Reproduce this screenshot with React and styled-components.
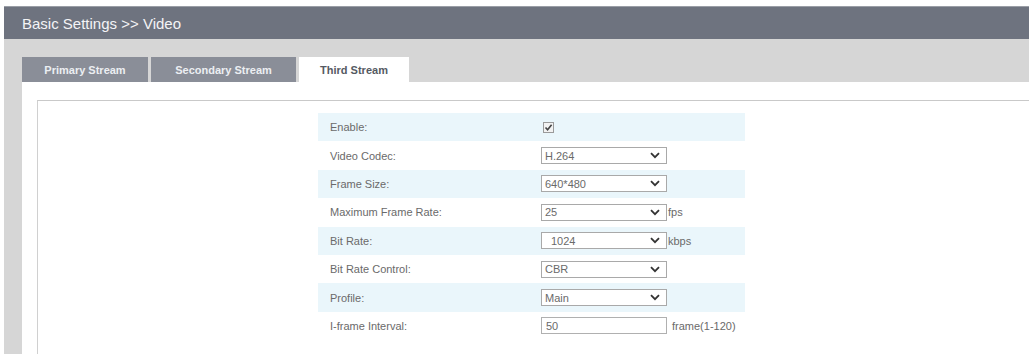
import React from "react";
import styled, { createGlobalStyle } from "styled-components";

const GlobalStyle = createGlobalStyle`
  body {
    margin: 0;
    background: #ffffff;
    font-family: "Liberation Sans", Arial, sans-serif;
  }
`;

const Page = styled.div`
  padding: 6px 0 0 4px;
  height: 348px;
  overflow: hidden;
`;

const Frame = styled.div`
  background: #d6d6d6;
  height: 100%;
  display: flex;
  flex-direction: column;
`;

const Header = styled.div`
  height: 33px;
  background: #6e737f;
  border-top: 1px solid #9a9ea6;
  box-sizing: border-box;
  color: #f4f4f6;
  font-size: 15px;
  display: flex;
  align-items: center;
  padding-left: 18px;
`;

const TabBar = styled.div`
  display: flex;
  gap: 3px;
  padding: 18px 0 0 18px;
`;

const Tab = styled.div`
  height: 25px;
  width: ${(p) => p.w}px;
  display: flex;
  align-items: center;
  justify-content: center;
  font-size: 11px;
  font-weight: bold;
  background: ${(p) => (p.active ? "#ffffff" : "#8a8e98")};
  color: ${(p) => (p.active ? "#555a62" : "#eceef2")};
`;

const Content = styled.div`
  flex: 1;
  margin-left: 18px;
  background: #ffffff;
  padding: 18px 0 0 15px;
  display: flex;
`;

const Panel = styled.div`
  flex: 1;
  border-top: 1px solid #c9c9c9;
  border-left: 1px solid #d0d0d0;
  padding: 12px 0 0 280px;
`;

const Form = styled.div`
  width: 427px;
  display: flex;
  flex-direction: column;
`;

const Row = styled.div`
  height: 28.4px;
  display: flex;
  align-items: center;
  background: ${(p) => (p.shade ? "#eaf6fb" : "transparent")};
  font-size: 11px;
  color: #6a6a6a;
`;

const Label = styled.div`
  width: 223px;
  padding-left: 12px;
  box-sizing: border-box;
`;

const Select = styled.div`
  width: ${(p) => p.w || 126}px;
  height: 17px;
  box-sizing: border-box;
  border: 1px solid #a9a9a9;
  background: #fff;
  display: flex;
  align-items: center;
  justify-content: space-between;
  padding: 0 6px 0 3px;
  color: #6a6a6a;
  font-size: 11px;
`;

const Input = styled.div`
  width: 126px;
  height: 17px;
  box-sizing: border-box;
  border: 1px solid #b0b0b0;
  background: #fff;
  display: flex;
  align-items: center;
  padding-left: 4px;
  color: #6a6a6a;
`;

const Unit = styled.span`
  margin-left: ${(p) => p.gap || 2}px;
  color: #6a6a6a;
`;

const Check = styled.div`
  width: 11px;
  height: 11px;
  box-sizing: border-box;
  border: 1px solid #9a9a9a;
  background: #f2f2f2;
  display: flex;
  align-items: center;
  justify-content: center;
  margin-left: 2px;
`;

const Chevron = () => (
  <svg width="10" height="7" viewBox="0 0 10 7">
    <path d="M1 1.2 L5 5.2 L9 1.2" fill="none" stroke="#333" strokeWidth="1.8" />
  </svg>
);

const Tick = () => (
  <svg width="9" height="9" viewBox="0 0 9 9">
    <path d="M1.5 4.5 L3.6 6.8 L7.6 1.8" fill="none" stroke="#444" strokeWidth="1.6" />
  </svg>
);

const rows = [
  { label: "Enable:", kind: "check" },
  { label: "Video Codec:", kind: "select", value: "H.264" },
  { label: "Frame Size:", kind: "select", value: "640*480" },
  { label: "Maximum Frame Rate:", kind: "select", value: "25", unit: "fps" },
  { label: "Bit Rate:", kind: "select", value: "1024", unit: "kbps", pad: true },
  { label: "Bit Rate Control:", kind: "select", value: "CBR" },
  { label: "Profile:", kind: "select", value: "Main" },
  { label: "I-frame Interval:", kind: "input", value: "50", unit: "frame(1-120)" },
];

export default function App() {
  return (
    <>
      <GlobalStyle />
      <Page>
        <Frame>
          <Header>Basic Settings &gt;&gt; Video</Header>
          <TabBar>
            <Tab w={126}>Primary Stream</Tab>
            <Tab w={145}>Secondary Stream</Tab>
            <Tab w={110} active>
              Third Stream
            </Tab>
          </TabBar>
          <Content>
            <Panel>
              <Form>
                {rows.map((r, i) => (
                  <Row key={r.label} shade={i % 2 === 0}>
                    <Label>{r.label}</Label>
                    {r.kind === "check" && (
                      <Check>
                        <Tick />
                      </Check>
                    )}
                    {r.kind === "select" && (
                      <Select>
                        <span style={r.pad ? { paddingLeft: 6 } : undefined}>{r.value}</span>
                        <Chevron />
                      </Select>
                    )}
                    {r.kind === "input" && <Input>{r.value}</Input>}
                    {r.unit && <Unit gap={r.kind === "input" ? 5 : 1}>{r.unit}</Unit>}
                  </Row>
                ))}
              </Form>
            </Panel>
          </Content>
        </Frame>
      </Page>
    </>
  );
}
